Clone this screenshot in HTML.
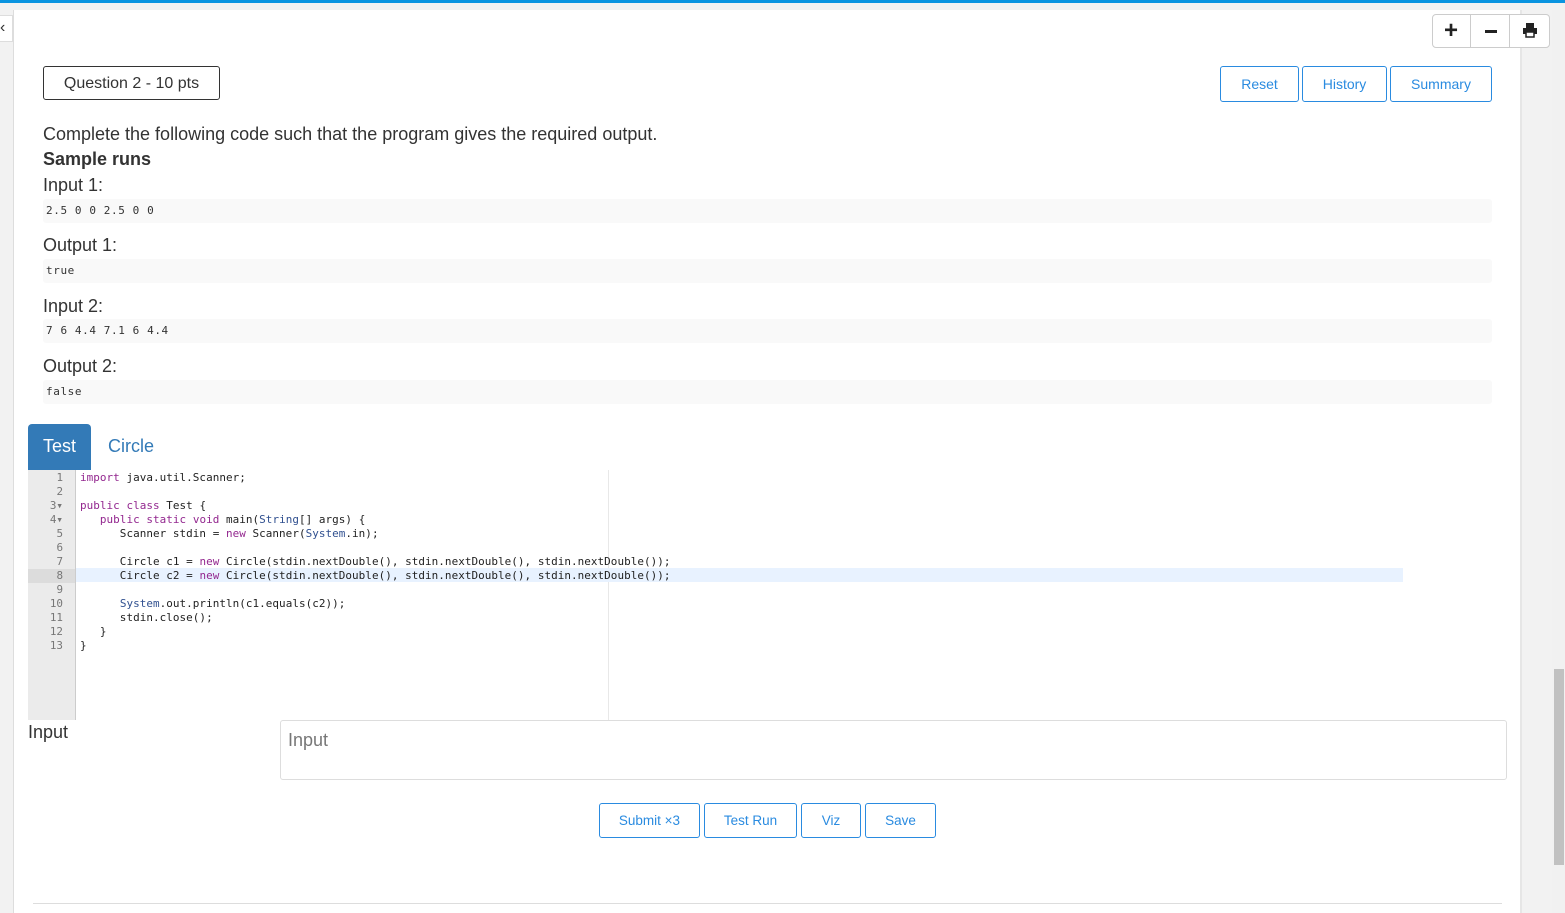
<!DOCTYPE html>
<html><head><meta charset="utf-8"><style>
*{box-sizing:border-box;margin:0;padding:0}
body{width:1565px;height:913px;overflow:hidden;background:#f2f2f2;font-family:"Liberation Sans",sans-serif;position:relative;color:#333}
.abs{position:absolute}
.btn{position:absolute;border:1px solid #2a8be0;border-radius:3px;color:#2a8be0;font-size:14px;display:flex;align-items:center;justify-content:center;background:#fff}
.pre{position:absolute;left:43px;width:1449px;height:24px;background:#f9f9f9;border-radius:3px;font-family:"DejaVu Sans Mono",monospace;font-size:11px;letter-spacing:0.6px;padding-left:3px;line-height:24px;color:#333}
.h{position:absolute;left:43px;font-size:18px;color:#333}
.code{position:absolute;left:80px;top:470px;font-family:"DejaVu Sans Mono",monospace;font-size:10.95px;letter-spacing:0.05px;line-height:14px;white-space:pre;color:#222}
.gut{position:absolute;left:28px;top:470px;width:48px;height:250px;background:#ebebeb;border-right:1px solid #ccc;font-family:"DejaVu Sans Mono",monospace;font-size:10.9px;line-height:14px;color:#777;text-align:right;padding-right:12px;white-space:pre}
.k{color:#93278f}.t{color:#2f4f8f}
</style></head><body>
<div class="abs" style="left:0;top:0;width:1565px;height:3px;background:#0a94e0"></div>
<div class="abs" style="left:13px;top:10px;width:1509px;height:903px;background:#fff;border-left:1px solid #ddd;border-right:2px solid #e6e6e6"></div>
<div class="abs" style="left:0;top:15px;width:13px;height:27px;background:#fff;border:1px solid #ddd;border-left:none;font-size:16px;line-height:24px">‹</div>
<div class="abs" style="left:1552px;top:10px;width:13px;height:903px;background:#f1f1f1"></div>
<div class="abs" style="left:1554px;top:669px;width:10px;height:196px;background:#c1c1c1"></div>
<div class="abs" style="left:1432px;top:14px;width:118px;height:34px;border:1px solid #ccc;border-radius:4px;background:#fff"></div>
<div class="abs" style="left:1470px;top:14px;width:1px;height:34px;background:#ccc"></div>
<div class="abs" style="left:1509px;top:14px;width:1px;height:34px;background:#ccc"></div>
<div class="abs" style="left:1432px;top:14px;width:38px;height:34px;font-size:24px;font-weight:bold;text-align:center;line-height:33px;color:#222">+</div>
<div class="abs" style="left:1485px;top:30px;width:12px;height:3px;background:#222"></div>
<svg class="abs" style="left:1522px;top:22px" width="16" height="16" viewBox="0 0 16 16"><rect x="4" y="1" width="8" height="5" fill="#222"/><rect x="1" y="6" width="14" height="6" fill="#222"/><rect x="4" y="10" width="8" height="5" fill="#fff" stroke="#222" stroke-width="1.5"/></svg>
<div class="abs" style="left:43px;top:66px;width:177px;height:34px;border:1px solid #333;border-radius:3px;font-size:16px;text-align:center;line-height:34px">Question 2 - 10 pts</div>
<div class="btn" style="left:1220px;top:66px;width:79px;height:36px">Reset</div>
<div class="btn" style="left:1302px;top:66px;width:85px;height:36px">History</div>
<div class="btn" style="left:1390px;top:66px;width:102px;height:36px">Summary</div>
<div class="h" style="top:124px">Complete the following code such that the program gives the required output.</div>
<div class="h" style="top:149px;font-weight:bold">Sample runs</div>
<div class="h" style="top:175px">Input 1:</div>
<div class="pre" style="top:199px">2.5 0 0 2.5 0 0</div>
<div class="h" style="top:235px">Output 1:</div>
<div class="pre" style="top:259px">true</div>
<div class="h" style="top:296px">Input 2:</div>
<div class="pre" style="top:319px">7 6 4.4 7.1 6 4.4</div>
<div class="h" style="top:356px">Output 2:</div>
<div class="pre" style="top:380px">false</div>
<div class="abs" style="left:28px;top:424px;width:63px;height:46px;background:#337ab7;border-radius:4px 4px 0 0;color:#fff;font-size:18px;text-align:center;line-height:44px">Test</div>
<div class="abs" style="left:108px;top:436px;color:#337ab7;font-size:18px">Circle</div>
<div class="abs" style="left:608px;top:470px;width:1px;height:250px;background:#e8e8e8"></div>
<div class="abs" style="left:76px;top:568px;width:1327px;height:14px;background:#e8f2ff"></div>
<div class="gut" style="padding-top:1px">1
2
3▾
4▾
5
6
7
<span style="display:block;background:#dcdcdc;margin-right:-12px;padding-right:12px">8</span>9
10
11
12
13</div>
<div class="code" style="top:471px"><span class="k">import</span> java.util.Scanner;

<span class="k">public</span> <span class="k">class</span> Test {
   <span class="k">public</span> <span class="k">static</span> <span class="k">void</span> main(<span class="t">String</span>[] args) {
      Scanner stdin = <span class="k">new</span> Scanner(<span class="t">System</span>.in);

      Circle c1 = <span class="k">new</span> Circle(stdin.nextDouble(), stdin.nextDouble(), stdin.nextDouble());
      Circle c2 = <span class="k">new</span> Circle(stdin.nextDouble(), stdin.nextDouble(), stdin.nextDouble());

      <span class="t">System</span>.out.println(c1.equals(c2));
      stdin.close();
   }
}</div>
<div class="abs" style="left:28px;top:722px;font-size:18px">Input</div>
<div class="abs" style="left:280px;top:720px;width:1227px;height:60px;border:1px solid #ddd;border-radius:3px;font-size:18px;color:#777;padding:9px 7px">Input</div>
<div class="btn" style="left:599px;top:803px;width:101px;height:35px;font-size:13.5px">Submit ×3</div>
<div class="btn" style="left:704px;top:803px;width:93px;height:35px;font-size:13.5px">Test Run</div>
<div class="btn" style="left:801px;top:803px;width:60px;height:35px;font-size:13.5px">Viz</div>
<div class="btn" style="left:865px;top:803px;width:71px;height:35px;font-size:13.5px">Save</div>
<div class="abs" style="left:33px;top:903px;width:1469px;height:1px;background:#ddd"></div>
</body></html>
